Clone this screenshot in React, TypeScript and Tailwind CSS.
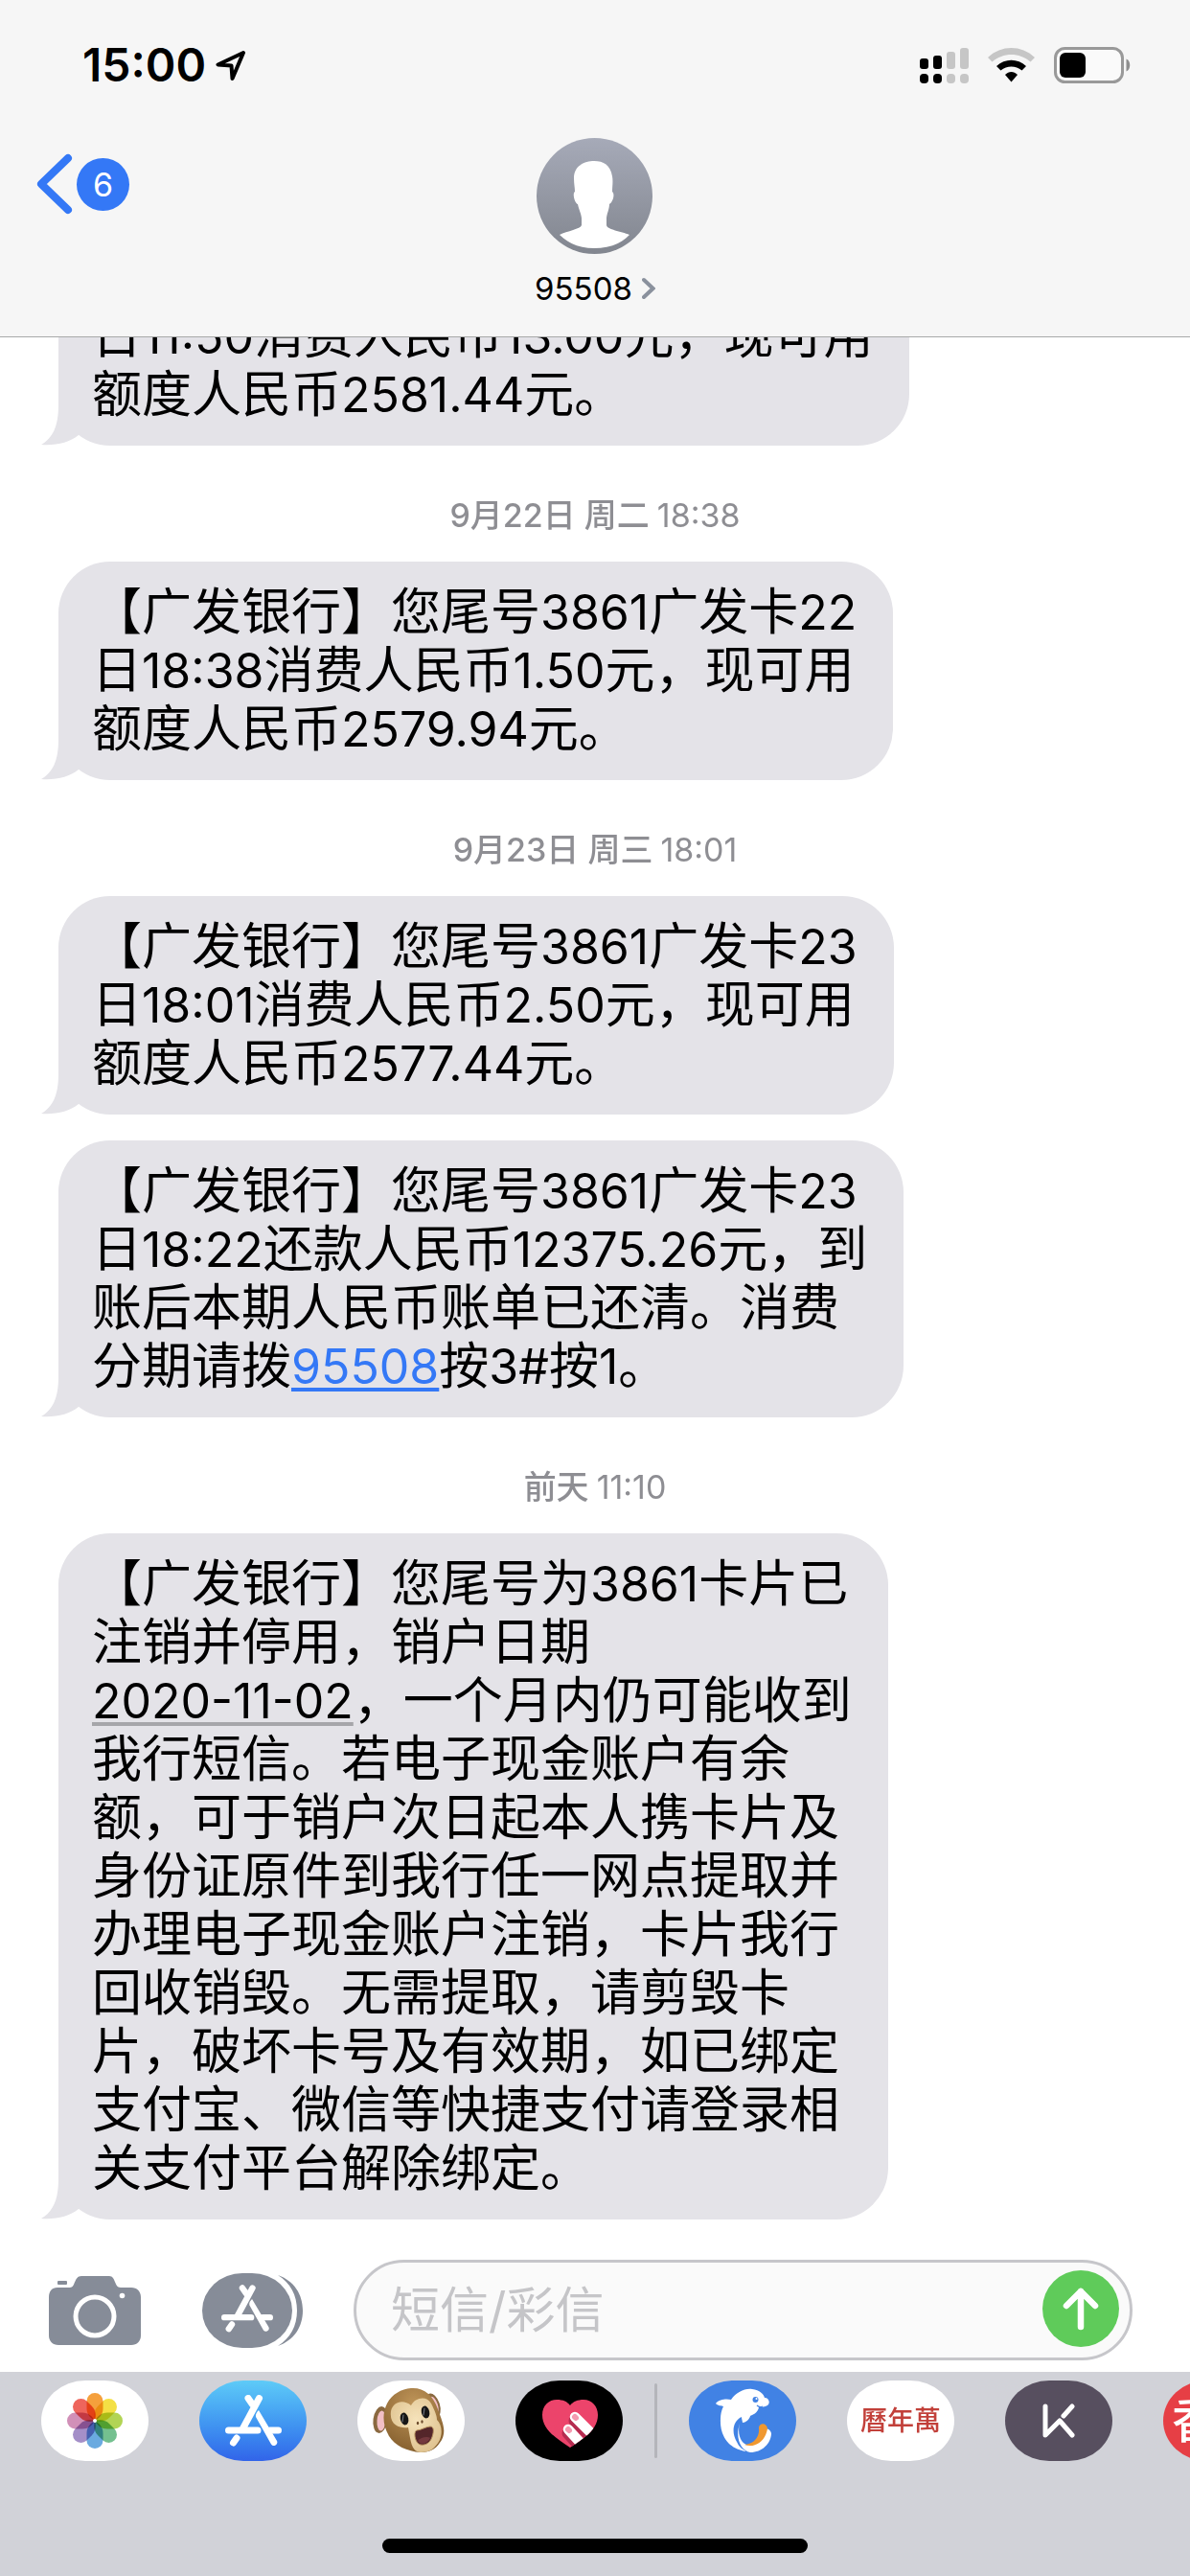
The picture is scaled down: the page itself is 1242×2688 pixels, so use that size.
import type { ReactNode } from 'react';

type Message = {
  id: number;
  day?: string;
  time?: string;
  lines: string[];
  cutOff?: boolean;
};

const MESSAGES: Message[] = [
  {
    id: 1,
    lines: ['日11:50消费人民币13.00元，现可用', '额度人民币2581.44元。'],
    cutOff: true,
  },
  {
    id: 2,
    day: '9月22日 周二',
    time: '18:38',
    lines: ['【广发银行】您尾号3861广发卡22', '日18:38消费人民币1.50元，现可用', '额度人民币2579.94元。'],
  },
  {
    id: 3,
    day: '9月23日 周三',
    time: '18:01',
    lines: ['【广发银行】您尾号3861广发卡23', '日18:01消费人民币2.50元，现可用', '额度人民币2577.44元。'],
  },
  {
    id: 4,
    lines: [
      '【广发银行】您尾号3861广发卡23',
      '日18:22还款人民币12375.26元，到',
      '账后本期人民币账单已还清。消费',
      '分期请拨95508按3#按1。',
    ],
  },
  {
    id: 5,
    day: '前天',
    time: '11:10',
    lines: [
      '【广发银行】您尾号为3861卡片已',
      '注销并停用，销户日期',
      '2020-11-02，一个月内仍可能收到',
      '我行短信。若电子现金账户有余',
      '额，可于销户次日起本人携卡片及',
      '身份证原件到我行任一网点提取并',
      '办理电子现金账户注销，卡片我行',
      '回收销毁。无需提取，请剪毁卡',
      '片，破坏卡号及有效期，如已绑定',
      '支付宝、微信等快捷支付请登录相',
      '关支付平台解除绑定。',
    ],
  },
];

const PETALS = ['#f5a03c', '#f4e045', '#b2d455', '#74c08f', '#6aaae0', '#a48fc8', '#d190b8', '#ee655c'];

// Digits are set a little smaller than the Chinese text around them
function renderLine(line: string) {
  return line.split(/([0-9.:#-]+)/).map((part, i) => {
    if (part === '95508') {
      return (
        <a
          key={i}
          href="tel:95508"
          className="text-[50px] text-[#3478f6] underline decoration-4 underline-offset-[4px]"
        >
          {part}
        </a>
      );
    }
    if (part === '2020-11-02') {
      return (
        <a
          key={i}
          href="#calendar"
          className="text-[50px] underline decoration-[#a6a6aa] decoration-4 underline-offset-[4px]"
        >
          {part}
        </a>
      );
    }
    return i % 2 === 1 ? (
      <span key={i} className="text-[50px]">
        {part}
      </span>
    ) : (
      part
    );
  });
}

function StatusBar() {
  return (
    <div className="flex h-[136px] items-center justify-between pr-[62px] pl-[86px]">
      <div className="flex items-center gap-2.5">
        <span className="text-[48px] leading-none font-semibold">15:00</span>
        <svg viewBox="0 0 32 32" className="h-8 w-8" fill="none" stroke="black" strokeWidth="4" strokeLinejoin="round">
          <path d="M29 3 2.500 15.500 16.500 16.500 17.500 30Z" />
        </svg>
      </div>
      <div className="flex items-center gap-5">
        <svg viewBox="0 0 51 37" className="h-[37px] w-[51px]">
          <rect x="0" y="11" width="9" height="11" rx="3" />
          <rect x="14" y="8" width="9" height="14" rx="3" />
          <rect x="28" y="4" width="9" height="18" rx="3" fill="#c6c6c6" />
          <rect x="42" y="0" width="9" height="22" rx="3" fill="#c6c6c6" />
          <rect x="0" y="27" width="9" height="10" rx="4" />
          <rect x="14" y="27" width="9" height="10" rx="4" />
          <rect x="28" y="27" width="9" height="10" rx="4" fill="#c6c6c6" />
          <rect x="42" y="27" width="9" height="10" rx="4" fill="#c6c6c6" />
        </svg>
        <svg viewBox="0 0 49 36" className="h-9 w-[49px]">
          <path d="M0 10C14-3.300 35-3.300 49 10L44.500 14.500C33 4.500 16 4.500 4.500 14.500Z" fill="#c6c6c6" />
          <path d="M9 19C18 10.500 31 10.500 40 19L35.500 23.500C29 18 20 18 13.500 23.500Z" />
          <path d="M18 28C22 24 27 24 31 28L24.500 35.500Z" />
        </svg>
        <svg viewBox="0 0 80 38" className="h-[38px] w-20">
          <rect x="1.500" y="1.500" width="70" height="35" rx="10" fill="#fafafa" stroke="#999" strokeWidth="3" />
          <rect x="6" y="6" width="27" height="26" rx="6" />
          <path d="M75.500 12.500C80.500 14.500 80.500 23.500 75.500 25.500Z" fill="#8f8f8f" />
        </svg>
      </div>
    </div>
  );
}

function Header() {
  return (
    <header className="z-10 border-b border-[#a8a9a9] bg-[#f6f6f6]">
      <StatusBar />
      <nav className="grid grid-cols-[1fr_auto_1fr] items-start pt-2 pb-[30px] pl-[38px]">
        <button type="button" aria-label="返回" className="mt-4 flex w-fit items-center gap-1">
          <svg
            viewBox="0 0 38 64"
            className="h-16 w-[38px]"
            fill="none"
            stroke="#3478f6"
            strokeWidth="8"
            strokeLinecap="round"
            strokeLinejoin="round"
          >
            <path d="M33 5 5 32 33 59" />
          </svg>
          <span className="flex h-[55px] w-[55px] items-center justify-center rounded-full bg-[#3478f6] text-[34px] text-white">
            6
          </span>
        </button>
        <button type="button" className="mr-[38px] flex flex-col items-center gap-4">
          <svg viewBox="0 0 121 121" className="h-[121px] w-[121px]">
            <defs>
              <linearGradient id="avatar" x1="0" y1="0" x2="0" y2="1">
                <stop offset="0" stopColor="#a6aab8" />
                <stop offset="1" stopColor="#82868f" />
              </linearGradient>
            </defs>
            <circle cx="60.500" cy="60.500" r="60.500" fill="url(#avatar)" />
            <path
              d="M60 24C50 24 39 29 39 42 39 48 40 52 40 56 37 58 40 68 43 69 44 74 47 80 47 84V91C46 95 32 97 24 101 34 111 46 115 60 115 75 115 88 111 97 101 88 97 74 96 73 91V84C73 80 76 74 76 69 80 67 82 58 79 56 79 50 80 46 79 40 77 28 70 24 60 24Z"
              fill="white"
            />
          </svg>
          <span className="flex items-center gap-2.5 text-[33px] leading-10">
            95508
            <svg
              viewBox="0 0 14 24"
              className="h-6 w-[14px]"
              fill="none"
              stroke="#8a919d"
              strokeWidth="4"
              strokeLinecap="round"
            >
              <path d="M2 3 11.500 12 2 21" />
            </svg>
          </span>
        </button>
      </nav>
    </header>
  );
}

function Bubble({ message }: { message: Message }) {
  return (
    <div
      className={`relative ml-[61px] w-fit bg-[#e4e3e8] pt-[22px] pr-[38px] pb-[23px] pl-[35px] text-[52px] leading-[61px] whitespace-nowrap ${
        message.cutOff ? 'rounded-b-[54px]' : 'rounded-[54px]'
      }`}
    >
      <svg viewBox="0 0 60 60" className="absolute bottom-0 -left-[18px] h-[60px] w-[60px]" fill="#e4e3e8">
        <path d="M18 0V18C18 40 12 52 0 59 16 60 29 57 39 49L60 30V0Z" />
      </svg>
      {message.lines.map((line) => (
        <p key={line} className="relative h-[61px]">
          {renderLine(line)}
        </p>
      ))}
    </div>
  );
}

function Conversation() {
  return (
    <main className="flex min-h-0 flex-1 flex-col justify-end overflow-hidden pb-[42px]">
      {MESSAGES.map((message) => (
        <section key={message.id} className={message.day || message.cutOff ? '' : 'pt-[27px]'}>
          {message.day && (
            <h2 className="flex h-[121px] items-center justify-center gap-2 pt-6 text-[34px] text-[#8e8e93]">
              <span className="font-medium">{message.day}</span>
              <time>{message.time}</time>
            </h2>
          )}
          <Bubble message={message} />
        </section>
      ))}
    </main>
  );
}

function AppStoreGlyph({ className }: { className: string }) {
  return (
    <svg viewBox="0 0 59 54" className={className} fill="none" stroke="white" strokeWidth="7" strokeLinecap="round">
      <path d="M35.500 3.500 18 36M24 3.500 28.500 10M3.500 37H34M47 37H55.500M12 45 8.500 50" />
      <path
        d="M35 16 54 48A3.500 3.500 0 0 1 48 51.500L32 23C31.500 20 33 18 35 16Z"
        fill="white"
        stroke="none"
      />
    </svg>
  );
}

function Composer() {
  return (
    <form className="flex items-center pr-[60px] pb-3 pl-[51px]">
      <button type="button" aria-label="相机" className="shrink-0">
        <svg viewBox="0 0 96 72" className="h-[72px] w-24" fill="#868c98">
          <path d="M9 12H22C28 12 26 0 34 0H63C70 0 68 12 75 12H86C92 12 96 16 96 22V62C96 68 92 72 86 72H10C4 72 0 68 0 62V22C0 16 3 12 9 12Z" />
          <rect x="9" y="5" width="10" height="4" rx="1" />
          <circle cx="48" cy="42" r="20" fill="none" stroke="white" strokeWidth="5" />
          <circle cx="76.500" cy="20.500" r="2.800" fill="white" />
        </svg>
      </button>
      <button type="button" aria-label="App" className="relative ml-16 shrink-0">
        <svg viewBox="0 0 105 78" className="h-[78px] w-[105px]" fill="#868c98">
          <rect width="94" height="78" rx="42" ry="39" />
          <path d="M79 2C96 8 105 22 105 39 105 56 96 70 79 76 92 68 99 55 99 39 99 23 92 10 79 2Z" />
        </svg>
        <AppStoreGlyph className="absolute top-3 left-5 h-[50px] w-[54px]" />
      </button>
      <div className="ml-[53px] flex h-[105px] min-w-0 flex-1 items-center rounded-full border-3 border-[#c6c6ca] bg-[#fafafa] pr-[11px] pl-9">
        <input
          type="text"
          aria-label="短信/彩信"
          placeholder="短信/彩信"
          className="min-w-0 flex-1 bg-transparent text-[51px] leading-[61px] outline-none placeholder:text-[#c5c5c8]"
        />
        <button type="submit" aria-label="发送" className="mb-1 h-20 w-20 shrink-0 rounded-full bg-[#5fcb5a]">
          <svg
            viewBox="0 0 80 80"
            className="h-20 w-20"
            fill="none"
            stroke="white"
            strokeWidth="6.500"
            strokeLinecap="round"
            strokeLinejoin="round"
          >
            <path d="M40 22V59M25 37 40 22 55 37" />
          </svg>
        </button>
      </div>
    </form>
  );
}

function AppButton({ label, className, children }: { label: string; className: string; children: ReactNode }) {
  return (
    <button
      type="button"
      aria-label={label}
      className={`flex h-[84px] w-[112px] shrink-0 items-center justify-center overflow-hidden rounded-[46px/42px] ${className}`}
    >
      {children}
    </button>
  );
}

function PhotosIcon() {
  return (
    <svg viewBox="-56 -42 112 84" className="h-full w-full">
      {PETALS.map((color, i) => (
        <path
          key={color}
          d="M0 0C-5-3-8.500-7-8.500-13V-20.500A8.500 8.500 0 0 1 8.500-20.500V-13C8.500-7 5-3 0 0Z"
          fill={color}
          transform={`rotate(${i * 45})`}
          className="mix-blend-multiply"
        />
      ))}
      <circle r="2" fill="white" />
    </svg>
  );
}

function MonkeyIcon() {
  return (
    <svg viewBox="0 0 112 84" className="h-full w-full">
      <defs>
        <radialGradient id="fur" cx="0.5" cy="0.25" r="0.75">
          <stop offset="0" stopColor="#bf9559" />
          <stop offset="1" stopColor="#86602f" />
        </radialGradient>
        <radialGradient id="face" cx="0.5" cy="0.4" r="0.7">
          <stop offset="0" stopColor="#f6e3bb" />
          <stop offset="1" stopColor="#dcbf8b" />
        </radialGradient>
      </defs>
      <ellipse cx="24" cy="41" rx="7.500" ry="14" fill="#8a6940" transform="rotate(8 24 41)" />
      <ellipse cx="25" cy="42" rx="4.500" ry="10.500" fill="#f2bfc6" transform="rotate(4 25 42)" />
      <ellipse cx="79" cy="26" rx="7" ry="13" fill="#8a6940" transform="rotate(-18 79 26)" />
      <ellipse cx="80" cy="26" rx="4" ry="9.500" fill="#f2bfc6" transform="rotate(-18 80 26)" />
      <path
        d="M56 8C69 7 79 15 84 30 89 44 93 52 88 62 83 70 78 75 66 75 52 74 39 68 33 58 26 46 26 34 31 24 36 14 46 9 56 8Z"
        fill="url(#fur)"
      />
      <path
        d="M35 32C37 22 48 19 56 26 60 18 72 15 77 24 81 32 83 37 83 41 88 46 89 54 86 62 81 71 76 75 66 75 56 74 56 64 53 49 45 50 33 47 35 32Z"
        fill="url(#face)"
      />
      <ellipse cx="49" cy="40" rx="4.200" ry="6.500" fill="#161616" transform="rotate(-12 49 40)" />
      <ellipse cx="71" cy="33" rx="4.200" ry="6.500" fill="#161616" transform="rotate(-12 71 33)" />
      <path d="M48 36 47 43M70 29 69 36" stroke="#6c7078" strokeWidth="1.200" strokeLinecap="round" />
      <ellipse cx="63" cy="44.500" rx="1.200" ry="1.800" fill="#6b4a2c" />
      <ellipse cx="67.500" cy="43" rx="1.200" ry="1.800" fill="#6b4a2c" />
      <path
        d="M62 52C66 52 72 48 76 48 80 48 80 53 78 59 76 65 71 68 66 67 60 66 58 53 62 52Z"
        fill="#54262a"
        stroke="#b8935f"
        strokeWidth="1"
      />
      <path d="M63 63C66 59 73 58 76 60 73 66 67 68 63 63Z" fill="#74393e" />
    </svg>
  );
}

function HeartIcon() {
  const heart =
    'M57 70C42 60 28 51 28 36 28 26 35 20 43 20 50 20 54 22 57 26 60 22 65 20 71 20 80 20 86 27 86 36 86 51 72 60 57 70Z';
  return (
    <svg viewBox="0 0 112 84" className="h-full w-full">
      <clipPath id="heart">
        <path d={heart} />
      </clipPath>
      <path d={heart} fill="#ec446b" />
      <g clipPath="url(#heart)" strokeLinecap="round">
        <path d="M54 55 70 73M61 42 86 67" stroke="#b52c50" strokeWidth="11" />
        <path d="M55 51 75 73M62 38 90 66" stroke="white" strokeWidth="10.500" />
        <path d="M55 51 56 52M62 38 63 39" stroke="#f49ab0" strokeWidth="6" />
      </g>
    </svg>
  );
}

function DolphinIcon() {
  return (
    <svg viewBox="0 0 112 84" className="h-full w-full" fill="white">
      <path d="M28 24C32 19 40 19 44 20 50 12 58 8 66 9 74 10 78 14 79 18 84 18 85 24 82 26 79 28 76 27 73 28 72 34 66 36 64 37 63 41 59 44 56 44 56 42 56 40 55 38 46 42 44 54 50 64 52 69 56 72 60 74 42 72 32 58 33 40 33 35 34 31 36 27 34 26 31 27 28 24Z" />
      <path d="M53 45C50 57 55 67 62 67 72 68 76 60 77 52 79 49 85 50 86 55 86 65 77 75 64 75 54 73 48 60 53 45Z" />
      <path
        d="M53 45C55 40 60 42 64 37 70 40 76 44 73 49 73 60 68 67 60 67 54 62 52 53 53 45Z"
        fill="#4182e4"
      />
      <path d="M58 67C68 71 80 64 82 50 81 44 74 44 73 49 74 58 69 66 58 67Z" fill="#f0982f" />
      <path d="M64 37C63 41 59 44 56 44L55 38Z" />
      <circle cx="69.500" cy="20" r="3" fill="#4182e4" />
      <circle cx="70.500" cy="19" r="1" />
      <path d="M71 26C73 28 75 28 77 27" fill="none" stroke="#4182e4" strokeWidth="1.200" />
    </svg>
  );
}

function AppDrawer() {
  return (
    <footer className="overflow-hidden bg-[#d1d2d8] pt-[9px] pb-6">
      <div className="flex items-center gap-[53px] pl-[43px]">
        <AppButton label="照片" className="bg-white">
          <PhotosIcon />
        </AppButton>
        <AppButton label="App Store" className="bg-linear-to-b from-[#5ecbf7] to-[#3264e9]">
          <AppStoreGlyph className="h-[54px] w-[59px]" />
        </AppButton>
        <AppButton label="拟我表情" className="bg-white">
          <MonkeyIcon />
        </AppButton>
        <div className="flex items-center gap-[33px]">
          <AppButton label="Digital Touch" className="bg-black">
            <HeartIcon />
          </AppButton>
          <div className="h-[78px] w-[3px] rounded-full bg-[#b4b5ba]" />
          <AppButton label="旅行" className="bg-[#4182e4]">
            <DolphinIcon />
          </AppButton>
        </div>
        <AppButton label="万年历" className="bg-white">
          <span className="text-[28px] leading-none font-medium text-[#c2403a]">曆年萬</span>
        </AppButton>
        <AppButton label="运动" className="bg-[#574f5f]">
          <svg
            viewBox="0 0 36 36"
            className="h-9 w-9"
            fill="none"
            stroke="white"
            strokeWidth="5"
            strokeLinecap="round"
            strokeLinejoin="round"
          >
            <path d="M4 3V33L19 18 32 33" />
            <path d="M32 3 23 13" />
          </svg>
        </AppButton>
        <AppButton label="菜谱" className="bg-[#e63f45]">
          <span className="mr-11 text-[50px] leading-none font-medium text-white">香</span>
        </AppButton>
      </div>
      <div className="mx-auto mt-[81px] h-[15px] w-[444px] rounded-full bg-black" />
    </footer>
  );
}

export default function App() {
  return (
    <div className="flex h-screen flex-col bg-white font-['Inter','Noto_Sans_CJK_SC',sans-serif] text-black">
      <Header />
      <Conversation />
      <Composer />
      <AppDrawer />
    </div>
  );
}
